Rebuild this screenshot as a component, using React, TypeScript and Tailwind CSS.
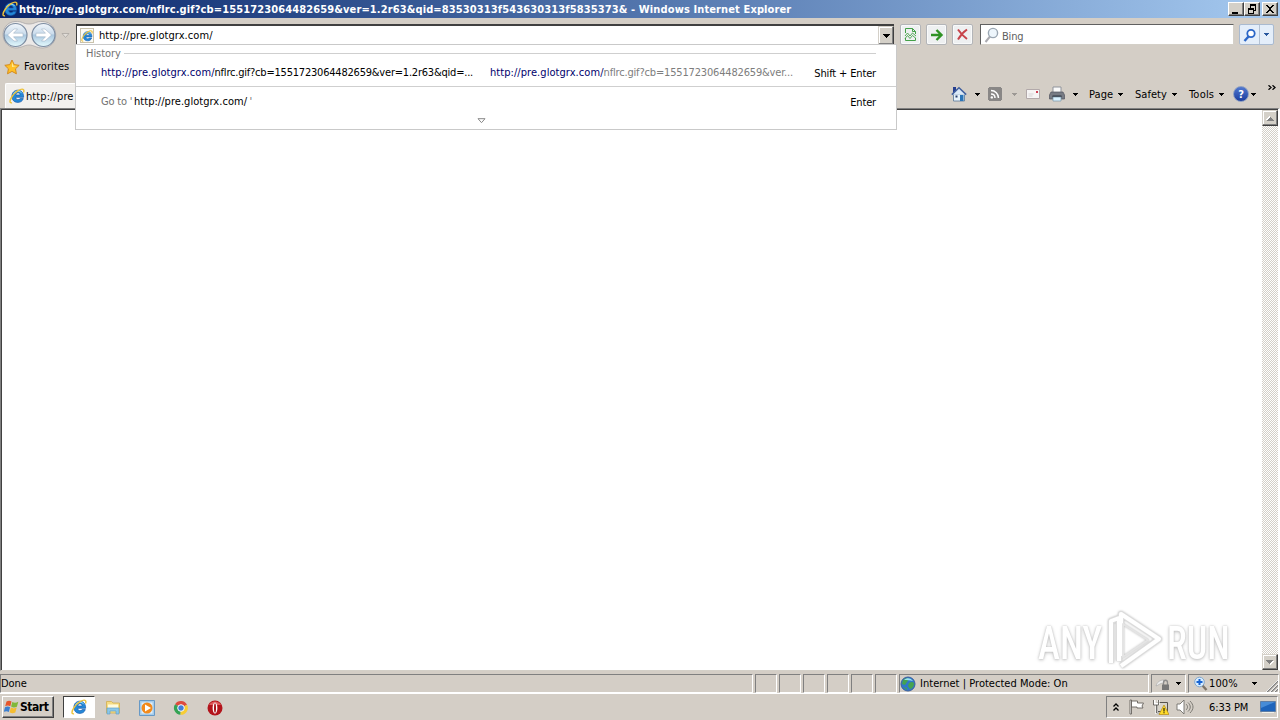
import { type ReactNode } from 'react';
import clsx from 'clsx';

interface TextProps {
  children: ReactNode;
  className?: string;
}

const Text = ({ children, className }: TextProps) => (
  <span className={clsx('block shrink-0 whitespace-pre leading-[14px]', className)}>{children}</span>
);

const Caret = ({ className }: { className?: string }) => (
  <svg viewBox="0 0 5 3" className={clsx('h-[3px] w-[5px] shrink-0', className)} shapeRendering="crispEdges">
    <path d="M0 0h5v1H0zM1 1h3v1H1zM2 2h1v1H2z" fill="currentColor" />
  </svg>
);

const IeLogo = ({ className }: { className?: string }) => (
  <svg viewBox="0 0 16 16" className={clsx('shrink-0', className)}>
    <path
      fillRule="evenodd"
      d="M8.800 2.200C12.600 2.200 14.800 5 14.600 9.300H6.700C6.800 10.900 7.700 11.700 9 11.700C10 11.700 10.700 11.300 11.100 10.600H14.300C13.400 13.200 11.500 14.400 8.800 14.400C5.200 14.400 2.900 12 2.900 8.300C2.900 4.700 5.300 2.200 8.800 2.200ZM6.800 7H11.200C11.100 5.600 10.200 4.800 9 4.800C7.800 4.800 7 5.600 6.800 7Z"
      fill="#2489d8"
      stroke="#1659ad"
      strokeWidth=".7"
    />
    <path d="M4.500 6C5.300 4 7 3.200 8.800 3.200C10.600 3.200 12 4 12.900 5.200" fill="none" stroke="#8fdcf8" strokeWidth="1" />
    <path
      d="M3 14.800C0 15.500.6 12 3.400 8C6.500 3.600 11.800.4 14 1.300C15.100 1.800 15 3.300 14.500 4.600"
      fill="none"
      stroke="#edc23a"
      strokeWidth="1.400"
    />
  </svg>
);

const WindowButton = ({ children, className }: { children: ReactNode; className?: string }) => (
  <div
    className={clsx(
      'flex h-[14px] w-4 items-center justify-center border border-b-[#404040] border-l-white border-r-[#404040] border-t-white bg-[#d4d0c8] shadow-[inset_-1px_-1px_#808080]',
      className,
    )}
  >
    <svg viewBox="0 0 14 12" className="mb-px h-3 w-3.5 shrink-0" shapeRendering="crispEdges">{children}</svg>
  </div>
);

const TitleBar = () => (
  <div className="flex h-[18px] shrink-0 items-center bg-linear-to-r from-[#0a246a] to-[#a6caf0] pl-[2px] pr-[2px]">
    <IeLogo className="h-4 w-4" />
    <Text className="ml-px mt-px text-[11px] font-bold tracking-[0.118px] text-white">
      http://pre.glotgrx.com/nflrc.gif?cb=1551723064482659&amp;ver=1.2r63&amp;qid=83530313f543630313f5835373&amp; - Windows Internet Explorer
    </Text>
    <div className="ml-auto flex">
      <WindowButton>
        <path d="M3 9h6v2H3z" />
      </WindowButton>
      <WindowButton>
        <path d="M5 1h6v2H5zM5 3h1v2H5zM10 3h1v5h-2V7h1zM3 5h6v2H3zM3 7h1v4H3zM8 7h1v4H8zM3 10h6v1H3z" />
      </WindowButton>
      <WindowButton className="ml-[2px]">
        <path d="M3 2h2v1h1v1h2V3h1V2h2v1h-1v1H9v1H8v2h1v1h1v1h1v1H9V9H8V8H6v1H5v1H3V9h1V8h1V7h1V5H5V4H4V3H3z" />
      </WindowButton>
    </div>
  </div>
);

const NavButtons = () => (
  <svg viewBox="0 0 74 30" className="mt-[2px] h-[30px] w-[74px] shrink-0">
    <defs>
      <linearGradient id="orb" x1="0" y1="0" x2="0" y2="1">
        <stop offset="0" stopColor="#f1f6fb" />
        <stop offset=".45" stopColor="#cbdcec" />
        <stop offset=".5" stopColor="#aac7df" />
        <stop offset="1" stopColor="#e5fafd" />
      </linearGradient>
    </defs>
    <path d="M15 1.500C22 1 23 4 29 4S36 1 43 1.500C60 3 60 27 43 28C36 28 34 25 29 25S22 28 15 28C-1 26-1 3 15 1.500Z" fill="#ece9e7" stroke="#a9a7a8" strokeWidth=".8" />
    {[15.5, 43.5].map(cx => (
      <circle key={cx} cx={cx} cy="15" r="11.500" fill="url(#orb)" stroke="#7c8ca1" strokeWidth="1.200" />
    ))}
    <path d="M7.500 15l6.500-6h3.500l-4 4.200H23v3.600h-9.500l4 4.200H14z" fill="#fff" stroke="#96a9bd" strokeWidth=".5" />
    <path d="M51.500 15L45 9h-3.500l4 4.200H36v3.600h9.500l-4 4.200H45z" fill="#fff" stroke="#96a9bd" strokeWidth=".5" />
    <path d="M62 13.500h7l-3.500 4z" fill="#e2ded9" stroke="#aaa6a1" strokeWidth=".8" />
  </svg>
);

const ToolButton = ({ children }: { children: ReactNode }) => (
  <div className="flex h-[21px] w-[21px] shrink-0 items-center justify-center rounded-[2px] border border-[#b3b5b8] bg-[#eef0f1] shadow-[inset_0_0_0_1px_#f9fafa]">
    {children}
  </div>
);

const AddressRow = () => (
  <div className="flex h-[31px] shrink-0 items-start">
    <NavButtons />
    <div className="ml-[2px] mt-[6px] flex h-[21px] w-[818px] shrink-0 items-center border-l border-t-2 border-[#404040] bg-white">
      <div className="ml-[3px] flex h-[15px] w-[14px] items-center justify-center border border-[#c9c2ac] bg-[#fbfaf4]">
        <IeLogo className="h-3 w-3" />
      </div>
      <Text className="ml-[5px] mt-px text-[11px] tracking-[0.060px]">http://pre.glotgrx.com/</Text>
      <div className="ml-auto flex h-[19px] w-4 items-center justify-center border border-b-[#404040] border-l-[#d4d0c8] border-r-[#404040] border-t-[#d4d0c8] bg-[#d4d0c8] shadow-[inset_-1px_-1px_#808080,inset_1px_1px_#fff]">
        <svg viewBox="0 0 7 4" className="h-1 w-[7px]" shapeRendering="crispEdges">
          <path d="M0 0h7v1H0zM1 1h5v1H1zM2 2h3v1H2zM3 3h1v1H3z" />
        </svg>
      </div>
    </div>
    <div className="ml-[6px] mt-[6px] flex gap-[5px]">
      <ToolButton>
        <svg viewBox="0 0 13 15" className="h-[15px] w-[13px]" fill="none" stroke="#43a047">
          <path d="M1.500 6V1.500h7L11.500 4.500V7M8.500 1.500v3h3M1.500 11v2.500h10V11" />
          <path d="M1 9l2.500-3L6 9l2.500-3L12 9M1 11.500l2.500-3 2.500 3 2.500-3 3.500 3" strokeWidth=".9" />
        </svg>
      </ToolButton>
      <ToolButton>
        <svg viewBox="0 0 14 14" className="h-3.5 w-3.5" fill="none" stroke="#2f9224" strokeWidth="2.400">
          <path d="M1 7h10M6.500 2l5 5-5 5" />
        </svg>
      </ToolButton>
      <ToolButton>
        <svg viewBox="0 0 13 13" className="h-[13px] w-[13px]" fill="none" stroke="#c7444b" strokeWidth="2">
          <path d="M2 1.500c2 3 5.500 7 9 9.500M11 1.500C8 3.500 4 8 2 11.500" />
        </svg>
      </ToolButton>
    </div>
    <div className="ml-[7px] mt-[6px] flex h-[21px] w-[254px] items-center border border-b-[#d4d0c8] border-l-[#606060] border-r-[#d4d0c8] border-t-[#606060] bg-white pl-[3px]">
      <svg viewBox="0 0 15 16" className="h-4 w-[15px]" fill="none">
        <path d="M6 9.500L1.500 15" stroke="#aaaab0" strokeWidth="2" />
        <circle cx="9" cy="6" r="4.600" fill="#eef6fc" stroke="#9ba7b3" strokeWidth="1.400" />
      </svg>
      <Text className="ml-[3px] mt-[4px] text-[11px] tracking-[-0.200px] text-[#606060]">Bing</Text>
    </div>
    <div className="ml-[5px] mt-[6px] flex h-[21px] w-[35px] rounded-[2px] border border-[#a9bad0] bg-[#e4eefa]">
      <div className="flex w-5 items-center justify-center border-r border-[#b4c2d4]">
        <svg viewBox="0 0 14 14" className="h-3.5 w-3.5" fill="none" stroke="#2b66c7">
          <path d="M5.500 8.500L1.500 13" strokeWidth="2.400" />
          <circle cx="8" cy="5.500" r="3.700" fill="#fff" strokeWidth="1.800" />
        </svg>
      </div>
      <div className="flex flex-1 items-center justify-center">
        <Caret className="text-[#28579e]" />
      </div>
    </div>
  </div>
);

const FavoritesRow = () => (
  <div className="flex h-[34px] shrink-0 items-center pl-[4px] pt-px">
    <svg viewBox="0 0 16 16" className="h-4 w-4">
      <path d="M8 1l2.200 4.600 5 .7-3.700 3.500.9 5L8 12.400l-4.500 2.400.9-5L.8 6.300l5-.7z" fill="#ffc026" stroke="#d08418" strokeWidth=".9" strokeLinejoin="round" />
      <path d="M8 3l1.300 3.700 3.800.2L8 8z" fill="#ffeb9a" />
    </svg>
    <Text className="ml-[4px] text-[11px] tracking-[0.080px]">Favorites</Text>
  </div>
);

const CommandBar = () => (
  <div className="flex h-[20px] items-center">
    <svg viewBox="0 0 16 16" className="h-4 w-4">
      <path d="M2 1h3v6H2z" fill="#263f8f" />
      <path d="M2.500 8h11v7h-11z" fill="#e7f2fa" stroke="#597797" strokeWidth=".8" />
      <path d="M.8 8.600L8 1.800l7.200 6.800" fill="#dceaf7" stroke="#405f9d" strokeWidth="1.500" />
      <path d="M9 9h3.500v6H9z" fill="#2b75b8" />
      <path d="M4.500 9.500h2v2h-2z" fill="#263f6c" />
    </svg>
    <Caret className="ml-[8px]" />
    <svg viewBox="0 0 14 14" className="ml-[8px] h-3.5 w-3.5">
      <path d="M1 0h12v1h1v12h-1v1H1v-1H0V1h1z" fill="#898786" />
      <path d="M3 3.500c4.200 0 7.500 3.300 7.500 7.500M3 7c2.300 0 4 1.700 4 4" fill="none" stroke="#fff" strokeWidth="1.500" />
      <circle cx="3.800" cy="10.400" r="1.200" fill="#fff" />
    </svg>
    <Caret className="ml-[10px] text-[#9c9894]" />
    <svg viewBox="0 0 14 10" className="ml-[9px] h-2.5 w-3.5">
      <path d="M.5.5h13v9H.5z" fill="#f6f4f4" stroke="#b2a9aa" />
      <path d="M10 2h2v2h-2z" fill="#cf4054" />
      <path d="M2.500 5h5M2.500 7h4" stroke="#d6d3d5" />
    </svg>
    <svg viewBox="0 0 16 16" className="ml-[9px] h-4 w-4">
      <path d="M4 1h8v6H4z" fill="#fafafa" stroke="#8f939b" />
      <path d="M2 6h12l1.500 3v4H.5V9z" fill="#777b84" stroke="#51555e" strokeWidth=".7" />
      <path d="M3.500 9.500h9v2h-9z" fill="#2f3440" />
      <path d="M4 11h8v4H4z" fill="#d9f1ff" stroke="#7995a8" strokeWidth=".7" />
    </svg>
    <Caret className="ml-[8px]" />
    <Text className="ml-[11px] mt-px w-[25px] text-[11px] tracking-[0.100px]">Page</Text>
    <Caret className="ml-[4px]" />
    <Text className="ml-[12px] mt-px w-[32px] text-[11px] tracking-[0.050px]">Safety</Text>
    <Caret className="ml-[5px]" />
    <Text className="ml-[12px] mt-px w-[25px] text-[11px] tracking-[0.200px]">Tools</Text>
    <Caret className="ml-[5px]" />
    <div className="ml-[9px] flex h-[16px] w-[16px] items-center justify-center rounded-full border border-[#8d9fc2] bg-linear-to-b from-[#5278cf] to-[#1c3d9f] text-[11px] font-bold leading-none text-white">?</div>
    <Caret className="ml-[2px]" />
    <svg viewBox="0 0 8 5" className="mb-[13px] ml-[12px] h-[5px] w-2" fill="none" stroke="#000" strokeWidth="1.300">
      <path d="M.5.3l2.500 2.200L.5 4.700M4.500.3L7 2.500 4.500 4.700" />
    </svg>
  </div>
);

const TabRow = () => (
  <div className="flex min-h-0 flex-1 items-start pl-[5px]">
    <div className="flex h-[25px] w-[180px] items-center rounded-t-[2px] border-l border-t border-white bg-[#f2f0ed] pl-[3px]">
      <IeLogo className="h-4 w-4" />
      <Text className="ml-px mt-px text-[11px] tracking-[0.100px]">http://pre</Text>
    </div>
    <div className="ml-auto mt-px pr-[4px]">
      <CommandBar />
    </div>
  </div>
);

const Suggestions = () => (
  <div className="absolute left-[75px] top-[44px] h-[86px] w-[822px] border border-[#c9c9c9] bg-white text-[11px]">
    <div className="flex h-[16px] items-center pl-[10px] pr-[20px]">
      <Text className="mt-[2px] w-[35px] tracking-[-0.050px] text-[#727272]">History</Text>
      <div className="ml-[3px] h-px flex-1 bg-[#cfcfcf]" />
    </div>
    <div className="flex h-[26px] items-center border-b border-[#cfcfcf] pl-[25px] pr-[20px]">
      <Text className="-mt-px w-[389px] tracking-[-0.210px]">
        <span className="tracking-[0.060px] text-[#00006c]">http://pre.glotgrx.com/</span>nflrc.gif?cb=1551723064482659&amp;ver=1.2r63&amp;qid=...
      </Text>
      <Text className="-mt-px tracking-[-0.170px] text-[#7d7d7d]">
        <span className="tracking-[0.060px] text-[#00006c]">http://pre.glotgrx.com/</span>nflrc.gif?cb=1551723064482659&amp;ver...
      </Text>
      <Text className="ml-auto tracking-[-0.150px]">Shift + Enter</Text>
    </div>
    <div className="flex h-[28px] items-center pl-[25px] pr-[20px] pt-[2px]">
      <Text className="w-[33px] tracking-[-0.200px] text-[#727272]">Go to '</Text>
      <Text className="tracking-[0.040px]">http://pre.glotgrx.com/<span className="tracking-[-0.600px] text-[#727272]"> '</span></Text>
      <Text className="ml-auto mt-[2px] tracking-[-0.150px]">Enter</Text>
    </div>
    <svg viewBox="0 0 9 6" className="ml-[401px] mt-[3px] h-1.5 w-[9px]">
      <path d="M1 .7h7L4.500 4.700z" fill="#fff" stroke="#888" />
    </svg>
  </div>
);

const ScrollButton = ({ up }: { up?: boolean }) => (
  <div className="flex h-4 w-4 items-center justify-center border border-b-[#404040] border-l-[#d4d0c8] border-r-[#404040] border-t-[#d4d0c8] bg-[#d4d0c8] shadow-[inset_-1px_-1px_#808080,inset_1px_1px_#fff]">
    <svg viewBox="0 0 8 5" className={clsx('h-[5px] w-2', up && 'rotate-180')} shapeRendering="crispEdges">
      <path d="M1 1h7v1H1zM2 2h5v1H2zM3 3h3v1H3zM4 4h1v1H4z" fill="#fff" />
      <path d="M0 0h7v1H0zM1 1h5v1H1zM2 2h3v1H2zM3 3h1v1H3z" fill="#808080" />
    </svg>
  </div>
);

const Watermark = () => (
  <div className="absolute bottom-[-3px] right-[27px] flex h-[64px] w-[197px] items-center font-['Roboto'] text-[46px] font-medium leading-none text-white [text-shadow:0_0_2px_#c4c4c4,0_1px_4px_#bcbcbc]">
    <span className="mt-[4px] block w-[66px] shrink-0 origin-left scale-x-[0.810]">ANY</span>
    <svg viewBox="0 0 58 64" className="ml-px h-16 w-[58px] shrink-0 drop-shadow-[0_0_1px_#b8b8b8]" fill="none" strokeLinejoin="round">
      <path d="M6 54V12l8-3v43M16 47V5L54 30 16 57" stroke="#ddd" strokeWidth="6" />
      <path d="M6 54V12l8-3v43M16 47V5L54 30 16 57" stroke="#fff" strokeWidth="4" />
      <path d="M18 15v33l25-17z" stroke="#e4e4e4" strokeWidth="2" />
    </svg>
    <span className="ml-[4px] mt-[4px] block w-[64px] shrink-0 origin-left scale-x-[0.790]">RUN</span>
  </div>
);

const Page = () => (
  <div className="flex h-[563px] shrink-0 border-b border-l border-r-2 border-t border-b-[#d4d0c8] border-l-[#808080] border-r-white border-t-[#808080] bg-white">
    <div className="relative flex-1 border-l border-t border-[#404040]">
      <Watermark />
    </div>
    <div className="flex w-4 flex-col justify-between border-t border-[#404040] bg-[#d4d0c8] bg-[repeating-conic-gradient(#d4d0c8_0_25%,#fff_0_50%)] bg-[length:2px_2px]">
      <ScrollButton up />
      <ScrollButton />
    </div>
  </div>
);

const StatusPanel = ({ children, className }: { children?: ReactNode; className?: string }) => (
  <div className={clsx('flex h-[19px] shrink-0 items-center border border-b-white border-l-[#808080] border-r-white border-t-[#808080]', className)}>
    {children}
  </div>
);

const StatusBar = () => (
  <div className="flex h-[23px] shrink-0 gap-[2px] border-b border-white pt-[3px] text-[11px]">
    <StatusPanel className="w-[753px]">
      <Text className="tracking-[-0.100px]">Done</Text>
    </StatusPanel>
    {[0, 1, 2, 3, 4, 5].map(panel => <StatusPanel key={panel} className="w-[22px]" />)}
    <StatusPanel className="w-[250px]">
      <svg viewBox="0 0 16 16" className="h-4 w-4">
        <circle cx="8" cy="8" r="7" fill="#2f78c8" stroke="#3a5f9c" />
        <path d="M3 4c2-2 5-2 6-1L7 6 5 9 2 8zM9 7c3-2 5-1 5 1s-2 5-4 5l-2-3zM3 11l4 1v2z" fill="#45a34f" />
        <path d="M4 4c3-3 7-2 9 1-3-1-6-1-9-1z" fill="#9be2f3" />
      </svg>
      <Text className="ml-[4px] tracking-[0.030px]">Internet | Protected Mode: On</Text>
    </StatusPanel>
    <StatusPanel className="w-[35px]">
      <svg viewBox="0 0 16 16" className="ml-[3px] h-4 w-4">
        <path d="M1 10c1-4 4-6 8-6v3C5 7 4 9 1 10z" fill="#eee" stroke="#aaa" strokeWidth=".7" />
        <path d="M8.500 9V6.500c0-3 4-3 4 0V9" fill="none" stroke="#8c8c8c" strokeWidth="1.300" />
        <path d="M7 8.500h7V14H7z" fill="#777" />
      </svg>
      <Caret className="ml-[5px]" />
    </StatusPanel>
    <StatusPanel className="w-[91px]">
      <svg viewBox="0 0 16 16" className="ml-[4px] h-4 w-4">
        <path d="M9 9l4.500 5" stroke="#7d7468" strokeWidth="2.400" />
        <circle cx="6.500" cy="6" r="4.800" fill="#d7edff" stroke="#82a6cb" />
        <path d="M6.500 3v6M3.500 6h6" stroke="#1763d2" strokeWidth="2" />
      </svg>
      <Text className="w-[30px] tracking-[0.100px]">100%</Text>
      <Caret className="ml-[13px]" />
      <svg viewBox="0 0 12 12" className="ml-auto mt-[5px] h-3 w-3 shrink-0">
        <path d="M1 12L12 1M5 12l7-7M9 12l3-3" stroke="#808080" strokeWidth="1.500" />
        <path d="M0 12L12 0M4 12l8-8M8 12l4-4" stroke="#fff" strokeWidth=".8" />
      </svg>
    </StatusPanel>
  </div>
);

const StartButton = () => (
  <div className="flex h-[22px] w-[52px] shrink-0 items-center border border-b-[#404040] border-l-white border-r-[#404040] border-t-white pl-px shadow-[inset_-1px_-1px_#808080]">
    <svg viewBox="0 0 16 16" className="h-4 w-4 shrink-0">
      <path d="M2.500 2.500c2-1.200 3.500-1 5 0L6.300 7.200C4.500 6.200 3 6.300 1.200 7.200z" fill="#e5562c" />
      <path d="M8.300 3c2 1.200 4 1 6-.3l-1.400 5c-2 1-4 1-5.800-.1z" fill="#80b83a" />
      <path d="M1 8.200c2-1.100 3.500-1 5.100 0l-1.300 4.700c-1.800-1-3.400-.9-5 0z" fill="#3b7fd0" />
      <path d="M6.900 8.600c2 1.100 3.900 1 5.800 0l-1.400 4.900c-2 1.100-4 1-5.700-.2z" fill="#f5bd31" />
    </svg>
    <Text className="text-[12px] font-bold tracking-[-0.450px]">Start</Text>
  </div>
);

const Taskbar = () => (
  <div className="flex min-h-0 flex-1 items-start pl-[2px] pt-[2px]">
    <StartButton />
    <div className="ml-[9px] flex h-[22px] w-8 items-center justify-center border border-l-[#404040] border-t-[#404040] border-white bg-white">
      <IeLogo className="h-4 w-4" />
    </div>
    <div className="flex h-[23px] items-center">
      <svg viewBox="0 0 16 16" className="ml-[10px] h-4 w-4">
        <path d="M1.500 3V1.500h5L8 3h6.500v10h-13z" fill="#f6dc82" stroke="#d2ad50" strokeWidth=".8" />
        <path d="M3 4.500h10v4H3z" fill="#fffadc" />
        <path d="M2 8h12v6h-3v-3H5v3H2z" fill="#89c7e9" stroke="#65a2c7" strokeWidth=".7" />
      </svg>
      <svg viewBox="0 0 16 16" className="ml-[18px] h-4 w-4">
        <path d="M.5.500h15v15H.5z" fill="#a5cceb" stroke="#6799c6" />
        <path d="M2.500 2.500h11v11h-11z" fill="#e2f1fb" />
        <circle cx="8" cy="8" r="5.500" fill="#f28a1c" />
        <path d="M6 4.500v7L12 8z" fill="#fff" />
      </svg>
      <svg viewBox="0 0 16 16" className="ml-[18px] h-4 w-4">
        <path d="M8 8L2.100 4.200A6.800 6.800 0 0 1 14 4.800z" fill="#de4b3e" />
        <path d="M8 8L2.100 4.200A6.800 6.800 0 0 0 7.500 14.800z" fill="#35a354" />
        <path d="M8 8l6-3.200A6.800 6.800 0 0 1 7.500 14.800z" fill="#f8cd34" />
        <circle cx="8" cy="8" r="3.300" fill="#437ed9" stroke="#fff" />
      </svg>
      <svg viewBox="0 0 16 16" className="ml-[18px] h-4 w-4">
        <circle cx="8" cy="8" r="7.500" fill="#b3141b" />
        <path d="M2 5a7 7 0 0 1 12 0z" fill="#df5b5c" />
        <ellipse cx="8" cy="8" rx="2.400" ry="5.500" fill="#fff" />
        <ellipse cx="8" cy="8" rx="1" ry="4.700" fill="#a81219" />
      </svg>
    </div>
    <div className="ml-auto mr-[2px] flex h-[22px] w-[172px] items-center border border-b-white border-l-[#808080] border-r-white border-t-[#808080]">
      <svg viewBox="0 0 6 8" className="ml-[6px] h-2 w-1.5" fill="none" stroke="#000" strokeWidth="1.300">
        <path d="M.5 3.500L3 1l2.500 2.500M.5 7.500L3 5l2.500 2.500" />
      </svg>
      <svg viewBox="0 0 16 16" className="ml-[10px] h-4 w-4" fill="#fff" stroke="#66625d" strokeWidth=".9">
        <path d="M1 1h1.500v14H1z" />
        <path d="M2.500 2h6v2h6L13 7l1 2H8V8H2.500z" />
      </svg>
      <svg viewBox="0 0 16 16" className="ml-[8px] h-4 w-4">
        <path d="M4.500 3.500h10v9h-10z" fill="#d9d5cb" stroke="#55524d" />
        <path d="M1.500 1v4h4V1M3.500 5v9h3" fill="none" stroke="#fff" strokeWidth="2.200" />
        <path d="M.5 1v5h5V1M3.500 6v8h3" fill="none" stroke="#514e49" strokeWidth=".8" />
        <path d="M11 6l5 9.500H6z" fill="#ffdb29" stroke="#b48b13" strokeWidth=".7" />
        <path d="M10.500 9h1v3.500h-1zM10.500 13.300h1v1h-1z" />
      </svg>
      <svg viewBox="0 0 18 16" className="ml-[7px] h-4 w-[18px]" fill="none" stroke="#73706b" strokeWidth=".9">
        <path d="M1 5h3l4-4v14l-4-4H1z" fill="#fff" />
        <path d="M10 5c2 2 2 4 0 6M12 3.500c3 3 3 6 0 9M14 2c4 4 4 8 0 12" />
      </svg>
      <Text className="ml-[15px] mt-px w-[42px] text-[11px] tracking-[-0.080px]">6:33 PM</Text>
      <svg viewBox="0 0 16 16" className="ml-[9px] h-4 w-4 shrink-0">
        <path d="M.5 2.500h15v10H.5z" fill="#1e64bb" stroke="#5f7ea5" />
        <path d="M1 3h14L1 9z" fill="#478cd7" />
        <path d="M2 13h12v1H2z" fill="#f1f0e9" />
      </svg>
    </div>
  </div>
);

export default function App() {
  return (
    <div className="relative flex h-[720px] w-[1280px] flex-col overflow-hidden bg-[#d4cec6] font-['DejaVu_Sans_Condensed','DejaVu_Sans',sans-serif] text-black [font-stretch:condensed]">
      <TitleBar />
      <div className="flex h-[90px] shrink-0 flex-col">
        <AddressRow />
        <FavoritesRow />
        <TabRow />
      </div>
      <Page />
      <StatusBar />
      <Taskbar />
      <Suggestions />
    </div>
  );
}
